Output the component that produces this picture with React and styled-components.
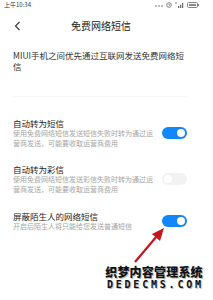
import React from "react";
import styled, { createGlobalStyle } from "styled-components";

const Global = createGlobalStyle`
  html, body { margin: 0; padding: 0; background: #fff; }
  body { font-family: "Noto Sans CJK SC", "Noto Sans", sans-serif; }
  * { box-sizing: border-box; }
`;

const Screen = styled.div`
  position: relative;
  width: 213px;
  height: 300px;
  overflow: hidden;
  background: #fff;
  display: flex;
  flex-direction: column;
`;

const StatusBar = styled.div`
  height: 10px;
  padding: 0 14px 0 4px;
  display: flex;
  align-items: center;
  justify-content: space-between;
  font-size: 6px;
  line-height: 10px;
  color: #333;
`;

const StatusIcons = styled.div`
  display: flex;
  align-items: center;
  gap: 3px;
  color: #555;
`;

const Header = styled.div`
  height: 32px;
  display: flex;
  align-items: center;
  padding-left: 14px;
  gap: 50px;
`;

const Title = styled.div`
  font-size: 10px;
  line-height: 12px;
  color: #222;
`;

const Description = styled.p`
  margin: 8px 0 0;
  padding: 0 26px 0 13px;
  font-size: 8.5px;
  line-height: 10.5px;
  color: #333;
`;

const Divider = styled.div`
  margin: 25px 26px 0 13px;
  height: 1px;
  background: #f6f6f6;
`;

const Row = styled.div`
  display: flex;
  align-items: center;
  gap: 4px;
  padding: 0 26px 0 13px;
  margin-top: ${(p) => p.$top}px;
`;

const TextCol = styled.div`
  flex: 1;
  min-width: 0;
`;

const ItemTitle = styled.div`
  font-size: 8.5px;
  line-height: 11px;
  color: #1c1c1c;
`;

const ItemSub = styled.div`
  font-size: 7px;
  line-height: 9.5px;
  color: #a6a6a6;
`;

const Toggle = styled.div`
  flex: none;
  width: 25px;
  height: 12px;
  border-radius: 6px;
  padding: 2px;
  display: flex;
  justify-content: ${(p) => (p.$on ? "flex-end" : "flex-start")};
  background: ${(p) => (p.$on ? "#1187fb" : "#f2f2f2")};
`;

const Knob = styled.div`
  width: 8px;
  height: 8px;
  border-radius: 50%;
  background: #fff;
`;

const Arrow = styled.svg`
  position: absolute;
  left: 0;
  top: 0;
  pointer-events: none;
`;

const Watermark = styled.div`
  position: absolute;
  left: 104px;
  top: 265px;
  width: 100px;
  display: flex;
  flex-direction: column;
  align-items: center;
`;

const WmCn = styled.div`
  font-family: "Noto Sans CJK SC", sans-serif;
  font-weight: 900;
  font-size: 12px;
  line-height: 14px;
  letter-spacing: 0.2px;
  color: #111;
  text-shadow: 1px 1px 0 #bbb, -1px -1px 0 #fff;
  white-space: nowrap;
`;

const WmEn = styled.div`
  font-family: "DejaVu Sans Mono", monospace;
  font-weight: bold;
  font-size: 10px;
  line-height: 11px;
  letter-spacing: 2.8px;
  margin-left: 2.8px;
  color: #111;
  text-shadow: 1px 1px 0 #bbb;
  white-space: nowrap;
`;

const BackIcon = () => (
  <svg width="7" height="10" viewBox="0 0 7 10">
    <polyline points="5.5,1 1.5,5 5.5,9" fill="none" stroke="#333" strokeWidth="1.1" />
  </svg>
);

const Icons = () => (
  <StatusIcons>
    <svg width="8" height="4" viewBox="0 0 8 4">
      <circle cx="1" cy="3" r="0.8" fill="#666" />
      <circle cx="4" cy="3" r="0.8" fill="#666" />
      <circle cx="7" cy="3" r="0.8" fill="#666" />
    </svg>
    <svg width="6" height="6" viewBox="0 0 6 6">
      <circle cx="3" cy="3" r="2.3" fill="none" stroke="#666" strokeWidth="0.8" />
      <polyline points="3,1.8 3,3 4,3.6" fill="none" stroke="#666" strokeWidth="0.6" />
    </svg>
    <svg width="9" height="6" viewBox="0 0 9 6">
      <rect x="3" y="4" width="1.2" height="2" fill="#666" />
      <rect x="5" y="2.7" width="1.2" height="3.3" fill="#666" />
      <rect x="7" y="1" width="1.2" height="5" fill="#666" />
      <rect x="0" y="0.5" width="2" height="1" fill="#888" />
    </svg>
    <svg width="12" height="6" viewBox="0 0 12 6">
      <rect x="0.5" y="0.5" width="10" height="5" rx="1.2" fill="none" stroke="#666" strokeWidth="0.8" />
      <rect x="10.8" y="2" width="1" height="2" fill="#666" />
      <rect x="2" y="2" width="7" height="2" fill="#888" />
    </svg>
  </StatusIcons>
);

const items = [
  {
    title: "自动转为短信",
    sub: "使用免费网络短信发送短信失败时转为通过运营商发送，可能要收取运营商费用",
    on: true,
    top: 21,
  },
  {
    title: "自动转为彩信",
    sub: "使用免费网络短信发送彩信失败时转为通过运营商发送，可能要收取运营商费用",
    on: false,
    top: 16,
  },
  {
    title: "屏蔽陌生人的网络短信",
    sub: "开启后陌生人将只能给您发送普通短信",
    on: true,
    top: 17,
  },
];

export default function App() {
  return (
    <>
      <Global />
      <Screen>
        <StatusBar>
          <span>上午10:34</span>
          <Icons />
        </StatusBar>
        <Header>
          <BackIcon />
          <Title>免费网络短信</Title>
        </Header>
        <Description>MIUI手机之间优先通过互联网发送免费网络短信</Description>
        <Divider />
        {items.map((it) => (
          <Row key={it.title} $top={it.top}>
            <TextCol>
              <ItemTitle>{it.title}</ItemTitle>
              <ItemSub>{it.sub}</ItemSub>
            </TextCol>
            <Toggle $on={it.on}>
              <Knob />
            </Toggle>
          </Row>
        ))}
        <Arrow width="213" height="300" viewBox="0 0 213 300">
          <line x1="135" y1="262" x2="157" y2="236" stroke="#c4161c" strokeWidth="2.2" />
          <polygon points="164,228 152,234 160,241" fill="#c4161c" />
        </Arrow>
        <Watermark>
          <WmCn>织梦内容管理系统</WmCn>
          <WmEn>DEDECMS.COM</WmEn>
        </Watermark>
      </Screen>
    </>
  );
}
